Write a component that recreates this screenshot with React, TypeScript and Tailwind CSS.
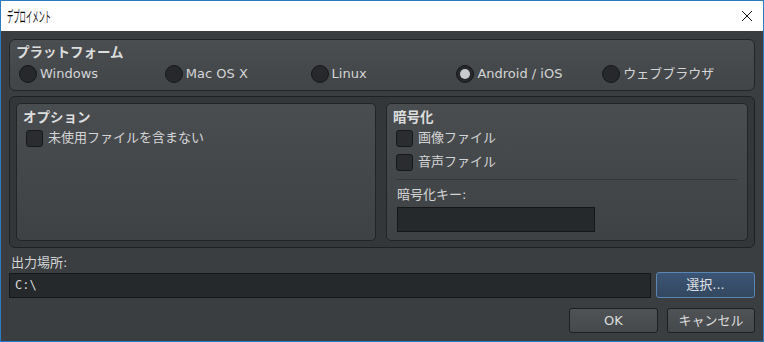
import React from 'react'

const FONT = "font-['DejaVu_Sans','Noto_Sans_CJK_JP',sans-serif]"

const Radio: React.FC<{ label: string; checked?: boolean }> = ({ label, checked }) => (
    <div className="flex items-center w-[146px] h-[20px]">
        <div className="w-[18px] h-[18px] rounded-full bg-[#26282b] border border-[#17181a] flex items-center justify-center shrink-0">
            {checked && <div className="w-[10px] h-[10px] rounded-full bg-[#c9cacb]" />}
        </div>
        <span className="ml-[3px] text-[13px] text-[#d4d5d6]">{label}</span>
    </div>
)

const Check: React.FC<{ label: string }> = ({ label }) => (
    <div className="flex items-center h-[22px]">
        <div className="w-[17px] h-[17px] rounded-[3px] bg-[#2a2c2f] border border-[#17181a] shrink-0" />
        <span className="ml-[5px] text-[13px] text-[#d4d5d6]">{label}</span>
    </div>
)

export default function App() {
    return (
        <div className={`w-[764px] h-[342px] flex flex-col border border-[#2b79c0] ${FONT}`}>
            <div className="h-[30px] bg-white flex items-center justify-between pl-[6px] pr-[8px] shrink-0">
                <span className="inline-block text-[15px] text-black font-['Noto_Sans_CJK_JP',sans-serif] scale-x-[0.42] origin-left">デプロイメント</span>
                <svg width="12" height="12" viewBox="0 0 12 12" className="mr-[2px]">
                    <path d="M1 1 L11 11 M11 1 L1 11" stroke="#111" strokeWidth="1" />
                </svg>
            </div>
            <div className="flex-1 bg-[#3b3e41] px-[8px] pt-[8px] flex flex-col">
                <div className="h-[52px] rounded-[6px] border border-[#222426] bg-gradient-to-b from-[#4b4e51] to-[#424548] px-[6px] pt-[4px]">
                    <div className="text-[13.5px] font-bold text-[#dcdddd] leading-[17px]">プラットフォーム</div>
                    <div className="flex mt-[3px] pl-[3px]">
                        <Radio label="Windows" />
                        <Radio label="Mac OS X" />
                        <Radio label="Linux" />
                        <Radio label="Android / iOS" checked />
                        <Radio label="ウェブブラウザ" />
                    </div>
                </div>
                <div className="mt-[5px] h-[152px] rounded-[6px] border border-[#1f2123] bg-[#34373a] p-[6px] flex gap-[10px]">
                    <div className="flex-1 rounded-[5px] border border-[#222426] bg-gradient-to-b from-[#4a4d50] to-[#3f4245] px-[6px] pt-[5px]">
                        <div className="text-[13.5px] font-bold text-[#dcdddd] leading-[17px]">オプション</div>
                        <div className="pl-[3px] mt-[1px]">
                            <Check label="未使用ファイルを含まない" />
                        </div>
                    </div>
                    <div className="w-[362px] rounded-[5px] border border-[#222426] bg-gradient-to-b from-[#4a4d50] to-[#3f4245] px-[6px] pt-[5px]">
                        <div className="text-[13.5px] font-bold text-[#dcdddd] leading-[17px]">暗号化</div>
                        <div className="pl-[3px] mt-[1px] flex flex-col gap-[2px]">
                            <Check label="画像ファイル" />
                            <Check label="音声ファイル" />
                        </div>
                        <div className="mt-[6px] mx-[3px] h-px bg-[#35383b]" />
                        <div className="mt-[7px] pl-[4px] text-[13px] text-[#d4d5d6] leading-[16px]">暗号化キー:</div>
                        <div className="mt-[4px] ml-[4px] w-[198px] h-[25px] bg-[#26292c] border border-[#151618]" />
                    </div>
                </div>
                <div className="mt-[7px] text-[13px] text-[#d4d5d6] leading-[16px] pl-[2px]">出力場所:</div>
                <div className="mt-[1px] flex items-center gap-[5px]">
                    <div className="flex-1 h-[25px] bg-[#26292c] border border-[#151618] flex items-center pl-[5px] font-['DejaVu_Sans_Mono',monospace] text-[12px] text-[#d4d5d6]">
                        C:\
                    </div>
                    <button className="w-[99px] h-[26px] rounded-[3px] border border-[#5b86b4] bg-gradient-to-b from-[#3c5576] to-[#33475f] text-[13px] text-[#e0e2e4]">
                        選択...
                    </button>
                </div>
                <div className="mt-[10px] flex justify-end gap-[9px]">
                    <button className="w-[89px] h-[25px] rounded-[3px] border border-[#1d1f21] bg-gradient-to-b from-[#505356] to-[#46494c] text-[13px] text-[#dcdddd]">
                        OK
                    </button>
                    <button className="w-[88px] h-[25px] rounded-[3px] border border-[#1d1f21] bg-gradient-to-b from-[#505356] to-[#46494c] text-[13px] text-[#dcdddd]">
                        キャンセル
                    </button>
                </div>
            </div>
        </div>
    )
}
